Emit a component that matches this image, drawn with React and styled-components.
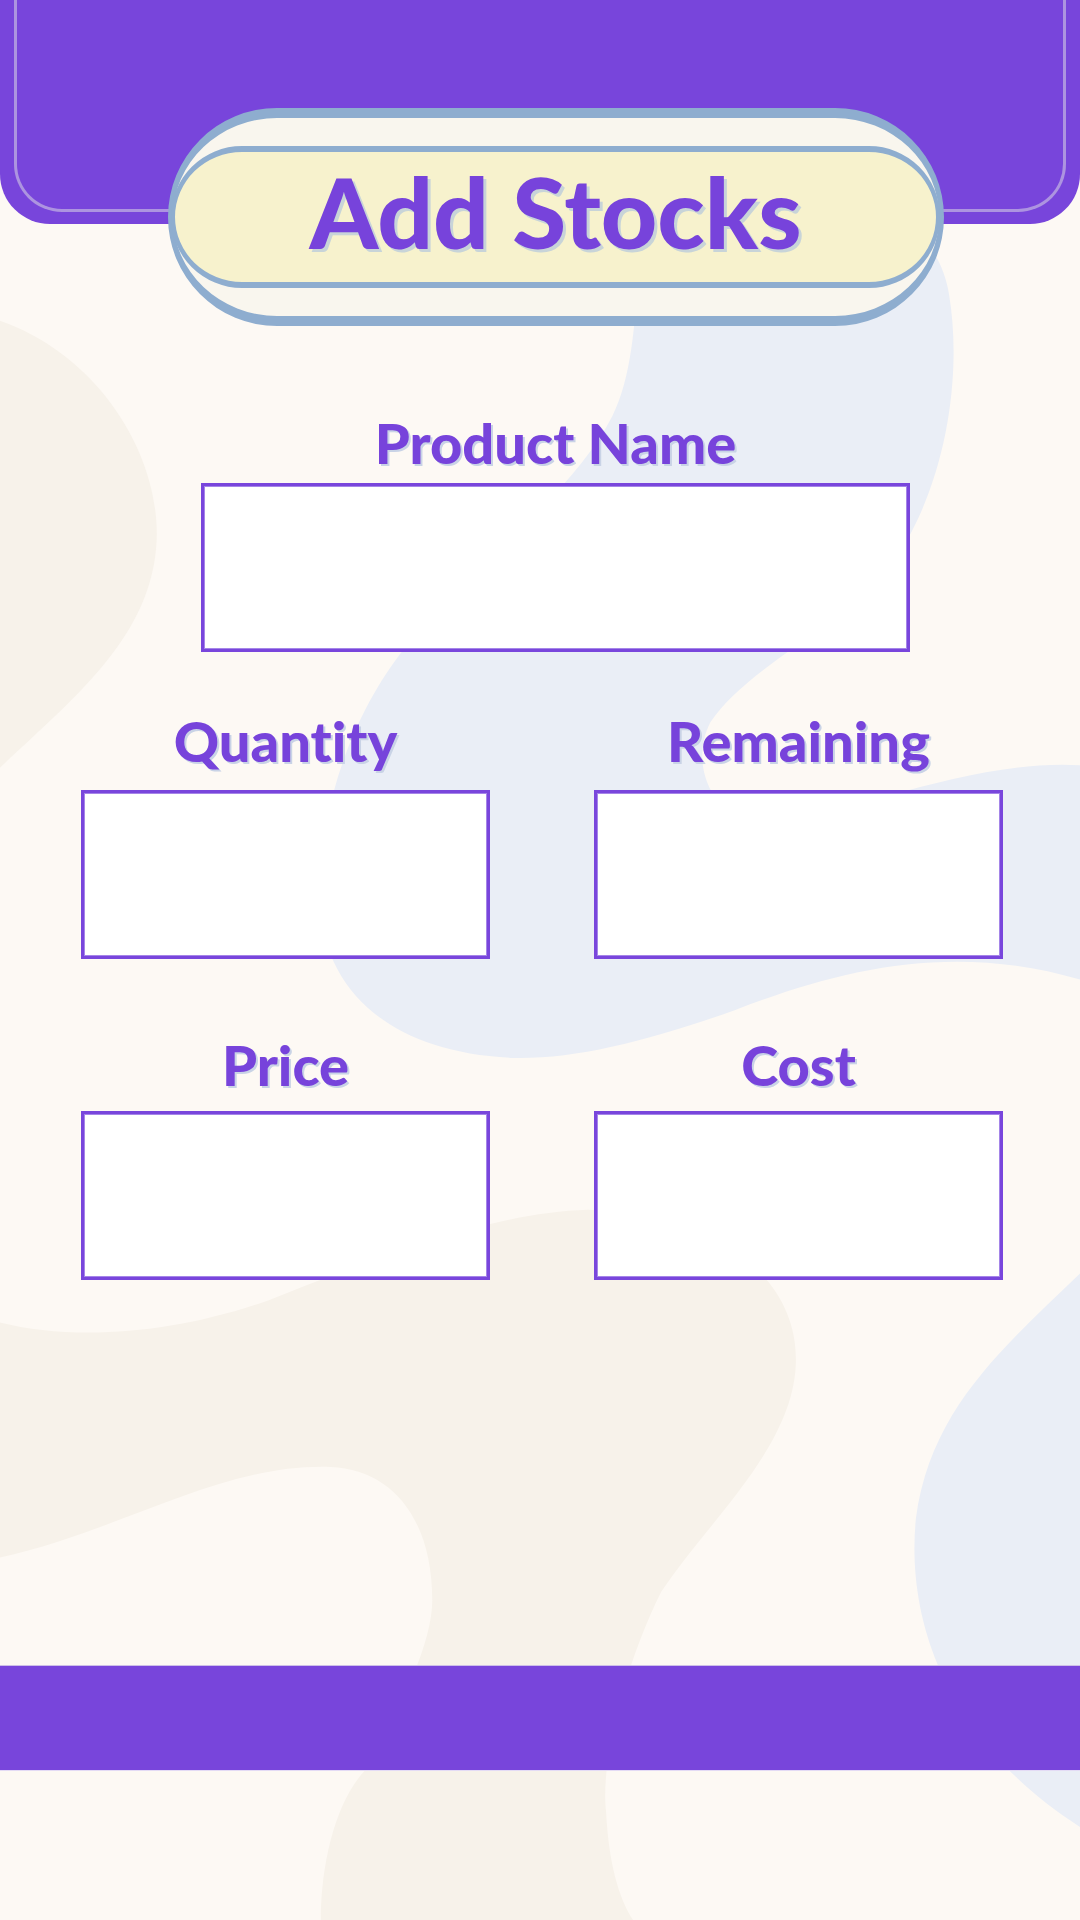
import React from "react";
import styled, { createGlobalStyle } from "styled-components";

const GlobalStyle = createGlobalStyle`
    body {
        margin: 0;
        background: #fdf9f4;
    }
`;

const Page = styled.div`
    position: relative;
    width: 1080px;
    height: 1920px;
    overflow: hidden;
    background: #fdf9f4;
    font-family: Lato, "Noto Sans", sans-serif;
    font-variant-ligatures: none;
`;

const Backdrop = styled.svg`
    position: absolute;
    top: 0;
    left: 0;
    width: 1080px;
    height: 1920px;
    z-index: 0;
`;

const Content = styled.div`
    position: relative;
    z-index: 1;
    display: flex;
    flex-direction: column;
    height: 100%;
`;

const Header = styled.div`
    display: flex;
    height: 224px;
    padding: 0 14px 12px;
    box-sizing: border-box;
    background: #7845db;
    border-radius: 0 0 50px 50px;
`;

const HeaderFrame = styled.div`
    flex: 1;
    border: 3px solid #ad94e0;
    border-top: none;
    border-radius: 0 0 48px 48px;
`;

const TitleRow = styled.div`
    display: flex;
    justify-content: center;
    padding-left: 32px;
    margin-top: -116px;
`;

const OuterPill = styled.div`
    display: flex;
    align-items: center;
    width: 776px;
    height: 218px;
    box-sizing: border-box;
    border-style: solid;
    border-color: #8eadcf;
    border-width: 10px 5px;
    border-radius: 109px;
    background: #f9f6ee;
`;

const InnerPill = styled.div`
    display: flex;
    align-items: center;
    justify-content: center;
    flex: 1;
    height: 142px;
    margin: 0 -1px 0 -2px;
    box-sizing: border-box;
    border-style: solid;
    border-color: #8eadcf;
    border-width: 6px 4px;
    border-radius: 71px;
    background: #f7f2cd;
`;

const Title = styled.h1`
    margin: 0;
    font-size: 98px;
    font-weight: 900;
    line-height: 1;
    color: #7743db;
    text-shadow: 3px 3px 0 #c8d4d8;
    padding-bottom: 12px;
`;

const Field = styled.div`
    display: flex;
    flex-direction: column;
    align-items: center;
    width: ${(p) => p.$width}px;
`;

const ProductRow = styled.div`
    display: flex;
    padding-left: 201px;
    margin-top: 89px;
`;

const Grid = styled.div`
    display: grid;
    grid-template-columns: 409px 409px;
    column-gap: 104px;
    padding-left: 81px;
    margin-top: ${(p) => p.$top}px;
`;

const Label = styled.div`
    font-size: 56px;
    font-weight: 900;
    line-height: 56px;
    color: #7743db;
    text-shadow: 2px 2px 0 #c9d3e6;
    margin-bottom: ${(p) => p.$gap}px;
`;

const Box = styled.input`
    display: block;
    width: 100%;
    height: 169px;
    box-sizing: border-box;
    border: 3px solid #7946dc;
    box-shadow: inset 0 0 0 1px #a585e8;
    background: #ffffff;
    outline: none;
    padding: 0 20px;
    font-family: Lato, sans-serif;
    font-size: 40px;
    color: #333;
`;

const Footer = styled.div`
    margin-top: auto;
    margin-bottom: 149px;
    height: 106px;
    box-sizing: border-box;
    background: #7845db;
    border-top: 1px solid #cdbfe8;
    border-bottom: 1px solid #e4dbf5;
`;

function Blobs() {
    return (
        <Backdrop viewBox="0 0 882 1568" preserveAspectRatio="none">
            <path
                fill="#eaeef6"
                d="M525 150 C640 140 760 150 775 240 C790 330 760 450 690 500 C640 535 600 560 580 590 C565 620 575 660 620 680 C700 660 800 620 882 625 L882 800 C780 770 690 790 600 825 C530 850 470 865 420 864 C320 860 265 810 262 740 C258 660 290 580 330 530 C390 460 470 400 500 340 C520 300 520 240 525 150 Z"
            />
            <path
                fill="#eaeef6"
                d="M882 1040 C820 1100 760 1150 748 1240 C740 1320 770 1420 882 1492 Z"
            />
            <path
                fill="#f7f2ea"
                d="M0 262 C80 290 130 370 128 440 C125 520 60 570 0 627 Z"
            />
            <path
                fill="#f7f2ea"
                d="M0 1080 C60 1095 140 1090 219 1062 C300 1030 400 990 480 988 C580 990 650 1040 650 1110 C650 1180 580 1240 540 1300 C510 1360 490 1440 495 1480 C497 1520 505 1550 517 1568 L262 1568 C262 1520 275 1470 298 1446 C330 1390 353 1340 353 1307 C353 1240 320 1200 270 1198 C180 1195 100 1250 0 1272 Z"
            />
        </Backdrop>
    );
}

export default function App() {
    return (
        <Page>
            <GlobalStyle />
            <Blobs />
            <Content>
                <Header>
                    <HeaderFrame />
                </Header>
                <TitleRow>
                    <OuterPill>
                        <InnerPill>
                            <Title>Add Stocks</Title>
                        </InnerPill>
                    </OuterPill>
                </TitleRow>

                <ProductRow>
                    <Field $width={709}>
                        <Label $gap={12}>Product Name</Label>
                        <Box />
                    </Field>
                </ProductRow>

                <Grid $top={61}>
                    <Field $width={409}>
                        <Label $gap={21}>Quantity</Label>
                        <Box />
                    </Field>
                    <Field $width={409}>
                        <Label $gap={21}>Remaining</Label>
                        <Box />
                    </Field>
                </Grid>

                <Grid $top={78}>
                    <Field $width={409}>
                        <Label $gap={18}>Price</Label>
                        <Box />
                    </Field>
                    <Field $width={409}>
                        <Label $gap={18}>Cost</Label>
                        <Box />
                    </Field>
                </Grid>

                <Footer />
            </Content>
        </Page>
    );
}
